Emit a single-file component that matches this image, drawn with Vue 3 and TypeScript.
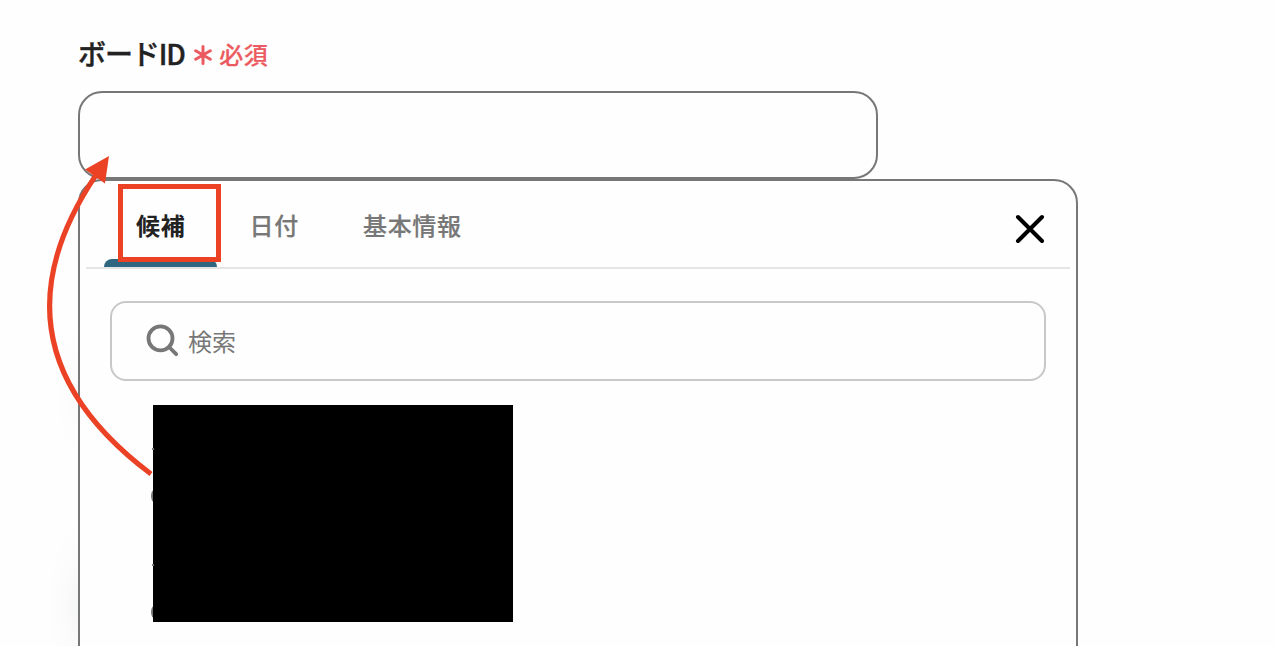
<template>
  <div class="page">
    <!-- Campo de ID -->
    <label class="field-label" for="board-id">
      <span class="field-name">ボードID</span>
      <svg class="asterisk" viewBox="0 0 18 20">
        <path d="M9 1.6V18.4M1.7 5.8L16.3 14.2M16.3 5.8L1.7 14.2" />
      </svg>
      <span class="required">必須</span>
    </label>
    <input id="board-id" v-model="boardId" class="board-input" type="text">

    <section class="panel">
      <header class="panel-header">
        <nav class="tabs">
          <button
            v-for="tab in tabs"
            :key="tab.id"
            class="tab-button"
            :class="{ 'active': activeTab === tab.id }"
            @click="activeTab = tab.id"
          >
            {{ tab.label }}
          </button>
        </nav>
        <button class="close-button" aria-label="閉じる">
          <svg width="30" height="30" viewBox="0 0 30 30">
            <path d="M3 3L27 27M27 3L3 27" />
          </svg>
        </button>
      </header>

      <div class="search-box">
        <svg class="search-icon" width="34" height="34" viewBox="0 0 34 34">
          <circle cx="15.5" cy="14.4" r="12" />
          <path d="M24 23L31.2 30.2" />
        </svg>
        <input v-model="keyword" class="search-input" type="text" placeholder="検索">
      </div>

      <div class="candidates">
        <span v-for="mark in marks" :key="mark.id" class="mark" :class="mark.kind"></span>
      </div>
    </section>

    <!-- Anotações sobre a tela -->
    <svg class="annotation" width="1276" height="646" viewBox="0 0 1276 646">
      <rect x="120.5" y="186.5" width="98" height="73" />
      <path class="curve" d="M151 474Q-19 346 96 175" />
      <path class="arrow-head" d="M109 156L85 169.5L105 183.5Z" />
    </svg>
  </div>
</template>

<script setup lang="ts">
import { ref } from 'vue'

const tabs = [
  { id: 'candidates', label: '候補' },
  { id: 'date', label: '日付' },
  { id: 'basic', label: '基本情報' }
]

const marks = [
  { id: 1, kind: 'dot' },
  { id: 2, kind: 'round' },
  { id: 3, kind: 'dot' },
  { id: 4, kind: 'round' }
]

const activeTab = ref('candidates')
const boardId = ref('')
const keyword = ref('')
</script>

<style>
body {
  background: #fefefe;
}
</style>

<style scoped>
.page {
  position: relative;
  box-sizing: border-box;
  height: 646px;
  padding: 31px 0 0 78px;
  overflow: hidden;
  background:
    radial-gradient(ellipse 34px 86px at 80px 606px, rgba(0, 30, 20, 0.04), rgba(0, 30, 20, 0.012) 50%, transparent),
    radial-gradient(ellipse 26px 70px at 80px 390px, rgba(0, 30, 20, 0.015), transparent);
  font-family: "Noto Sans CJK JP", sans-serif;
  color: #222;
}

.field-label {
  display: flex;
  align-items: center;
  height: 42px;
}

.field-name {
  margin-top: 1px;
  font-size: 28px;
  font-weight: 500;
  line-height: 42px;
  letter-spacing: -1.1px;
  -webkit-text-stroke: 0.4px #222;
}

.asterisk {
  width: 18px;
  height: 20px;
  margin: 6px 7px 0 9.5px;
  fill: none;
  stroke: #eb5a60;
  stroke-width: 3;
  stroke-linecap: round;
}

.required {
  margin-top: 3px;
  color: #eb5a60;
  font-size: 24px;
  font-weight: 500;
  line-height: 36px;
  letter-spacing: 0.02em;
  -webkit-text-stroke: 0.2px #eb5a60;
}

.board-input {
  display: block;
  box-sizing: border-box;
  width: 800px;
  height: 88px;
  margin: 18px 0 0;
  padding: 0 24px;
  border: 2px solid #777;
  border-radius: 24px;
  background: #fefefe;
  font: inherit;
  font-size: 28px;
  outline: none;
}

.panel {
  box-sizing: border-box;
  width: 1000px;
  height: 620px;
  padding: 0 6px;
  border: 2px solid #777;
  border-radius: 24px;
  background: #fefefe;
}

.panel-header {
  display: flex;
  justify-content: space-between;
  height: 86px;
  padding: 0 25px 0 18px;
  border-bottom: 2px solid #e5e5e5;
}

.tabs {
  display: flex;
}

.tab-button {
  position: relative;
  padding: 2px 32px 0;
  border: none;
  background: none;
  color: #777;
  font-family: inherit;
  font-size: 24px;
  font-weight: 500;
  line-height: 36px;
  letter-spacing: 0.03em;
  -webkit-text-stroke: 0.2px #777;
  cursor: pointer;
}

.tab-button.active {
  color: #222;
  font-weight: 700;
  -webkit-text-stroke: 0;
}

.tab-button.active::after {
  content: "";
  position: absolute;
  left: 0;
  right: 0;
  bottom: 0;
  height: 8px;
  border-radius: 8px 8px 0 0;
  background: #2f6780;
}

.close-button {
  display: flex;
  align-items: center;
  padding: 10px 0 0;
  border: none;
  background: none;
  cursor: pointer;
}

.close-button path {
  fill: none;
  stroke: #000;
  stroke-width: 4;
  stroke-linecap: round;
}

.search-box {
  display: flex;
  align-items: center;
  box-sizing: border-box;
  height: 80px;
  margin: 32px 24px 0;
  padding: 0 33px;
  border: 2px solid #c8c8c8;
  border-radius: 16px;
}

.search-icon {
  flex: none;
  fill: none;
  stroke: #777;
  stroke-width: 3.8;
  stroke-linecap: round;
}

.search-input {
  flex: 1;
  margin-left: 9px;
  padding: 0;
  border: none;
  background: none;
  font: inherit;
  font-size: 24px;
  line-height: 36px;
  outline: none;
}

.search-input::placeholder {
  color: #777;
  opacity: 1;
}

.candidates {
  box-sizing: border-box;
  width: 360px;
  height: 217px;
  margin: 24px 0 0 67px;
  padding-top: 43px;
  background: #000;
}

.mark {
  display: block;
  margin-left: -1px;
  background: #777;
}

.dot {
  width: 2px;
  height: 2px;
  margin-bottom: 40px;
}

.round {
  width: 6px;
  height: 12px;
  margin-left: -2px;
  margin-bottom: 62px;
  border-radius: 50% 0 0 50%;
  background: linear-gradient(to right, #777 2px, #000 2px);
}

.annotation {
  position: absolute;
  top: 0;
  left: 0;
  pointer-events: none;
}

.annotation rect,
.annotation .curve {
  fill: none;
  stroke: #eb4226;
  stroke-width: 5;
}

.annotation .arrow-head {
  fill: #eb4226;
}
</style>
